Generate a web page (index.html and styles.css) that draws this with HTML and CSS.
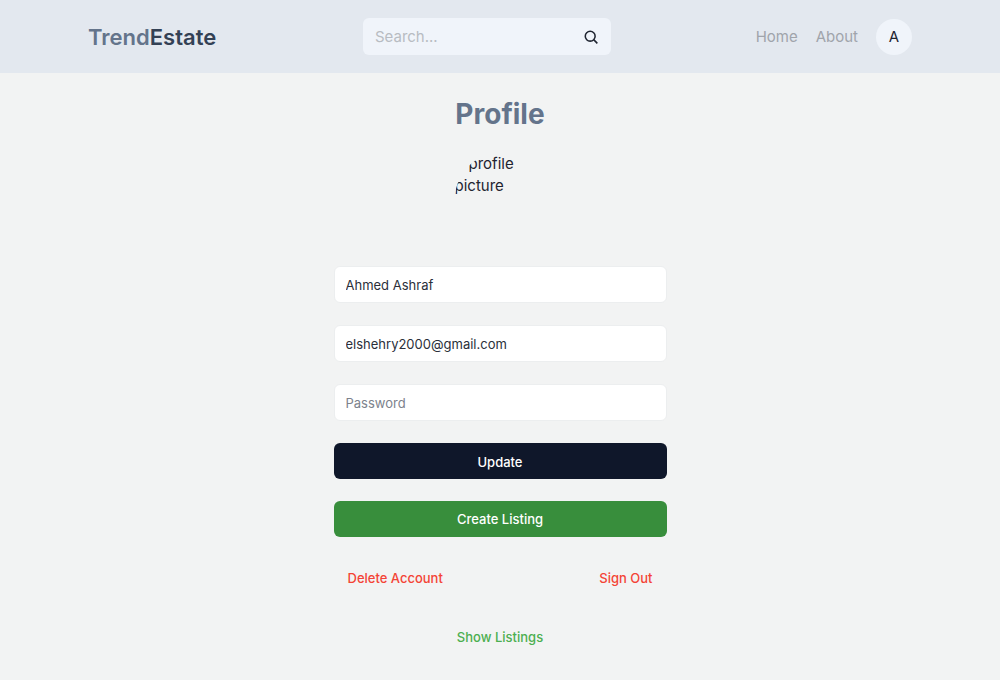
FILE: index.html
```html
<!DOCTYPE html>
<html lang="en">
<head>
<meta charset="utf-8">
<meta name="viewport" content="width=device-width, initial-scale=1">
<title>TrendEstate – Profile</title>
<link rel="stylesheet" href="styles.css">
</head>
<body>
<header class="site-header">
  <div class="header-inner">
    <a class="logo" href="#"><span class="logo-light">Trend</span><span class="logo-dark">Estate</span></a>
    <form class="search" role="search">
      <input class="search-input" type="text" placeholder="Search..." aria-label="Search">
      <button class="search-button" type="submit" aria-label="Submit search">
        <svg viewBox="0 0 24 24" width="16" height="16" fill="none" stroke="currentColor" stroke-width="2.3" aria-hidden="true"><circle cx="10.8" cy="10.8" r="7.4"/><path d="M16 16l5.5 5.5"/></svg>
      </button>
    </form>
    <nav class="nav">
      <a class="nav-link" href="#">Home</a>
      <a class="nav-link" href="#">About</a>
      <a class="avatar" href="#" aria-label="Account">A</a>
    </nav>
  </div>
</header>
<main class="profile">
  <h1 class="title">Profile</h1>
  <form class="profile-form">
    <div class="photo">profile picture</div>
    <input class="field" type="text" value="Ahmed Ashraf" aria-label="Username">
    <input class="field" type="email" value="elshehry2000@gmail.com" aria-label="Email">
    <input class="field" type="password" placeholder="Password" aria-label="Password">
    <button class="button button-update" type="submit">Update</button>
    <a class="button button-create" href="#">Create Listing</a>
  </form>
  <div class="account-actions">
    <button class="text-button danger" type="button">Delete Account</button>
    <button class="text-button danger" type="button">Sign Out</button>
  </div>
  <button class="text-button success" type="button">Show Listings</button>
</main>
</body>
</html>
```
FILE: styles.css
```css
* {
  box-sizing: border-box;
}

body {
  margin: 0;
  background: #f2f3f3;
  color: #1f2430;
  font-family: Inter, "Liberation Sans", sans-serif;
  font-size: 15px;
  line-height: 22px;
}

a {
  text-decoration: none;
}

input,
button {
  font-family: inherit;
}

.site-header {
  background: #e3e8ef;
  padding: 18px 88px;
}

.header-inner {
  display: flex;
  align-items: center;
  justify-content: space-between;
}

.logo {
  font-size: 22px;
  font-weight: 600;
}

.logo-light {
  color: #64748b;
}

.logo-dark {
  color: #334155;
}

.search {
  display: flex;
  align-items: center;
  width: 248px;
  height: 37px;
  padding: 0 12px;
  margin-left: 2px;
  border-radius: 6px;
  background: #f0f4fa;
}

.search-input {
  flex: 1;
  min-width: 0;
  padding: 0;
  border: 0;
  outline: 0;
  background: transparent;
  font-size: 15px;
}

.search-input::placeholder {
  color: #b8bcc2;
}

.search-button {
  display: flex;
  padding: 0;
  border: 0;
  background: transparent;
  color: #1f2430;
}

.nav {
  display: flex;
  align-items: center;
  gap: 18px;
}

.nav-link {
  color: #a0a4ab;
}

.avatar {
  width: 36px;
  height: 36px;
  border-radius: 50%;
  background: #f0f4fa;
  color: #1f2430;
  line-height: 36px;
  text-align: center;
}

.profile {
  display: flex;
  flex-direction: column;
  align-items: center;
  gap: 22px;
  width: 100%;
  max-width: 333px;
  margin: 0 auto;
  padding: 25px 0;
}

.title {
  margin: 0;
  color: #64748b;
  font-size: 28px;
  font-weight: 700;
  line-height: 33px;
}

.profile-form {
  display: flex;
  flex-direction: column;
  gap: 22px;
  width: 100%;
}

.photo {
  align-self: center;
  width: 91px;
  height: 91px;
  overflow: hidden;
  border-radius: 50%;
  text-indent: 14px;
}

.field {
  width: 100%;
  height: 37px;
  padding: 0 11px;
  border: 1px solid #eceeef;
  border-radius: 6px;
  background: #fff;
  color: #2a2f3a;
  font-size: 13px;
}

.field::placeholder {
  color: #7c828c;
}

.button {
  height: 36px;
  border: 0;
  border-radius: 6px;
  color: #fff;
  font-size: 13px;
  font-weight: 500;
  line-height: 36px;
  text-align: center;
}

.button-update {
  background: #0f172a;
}

.button-create {
  background: #388e3c;
}

.account-actions {
  display: flex;
  justify-content: space-between;
  width: 100%;
  padding: 0 14px;
}

.text-button {
  height: 37px;
  padding: 0;
  border: 0;
  background: transparent;
  font-size: 13px;
  font-weight: 500;
}

.danger {
  color: #f44336;
}

.success {
  color: #4caf50;
}
```
